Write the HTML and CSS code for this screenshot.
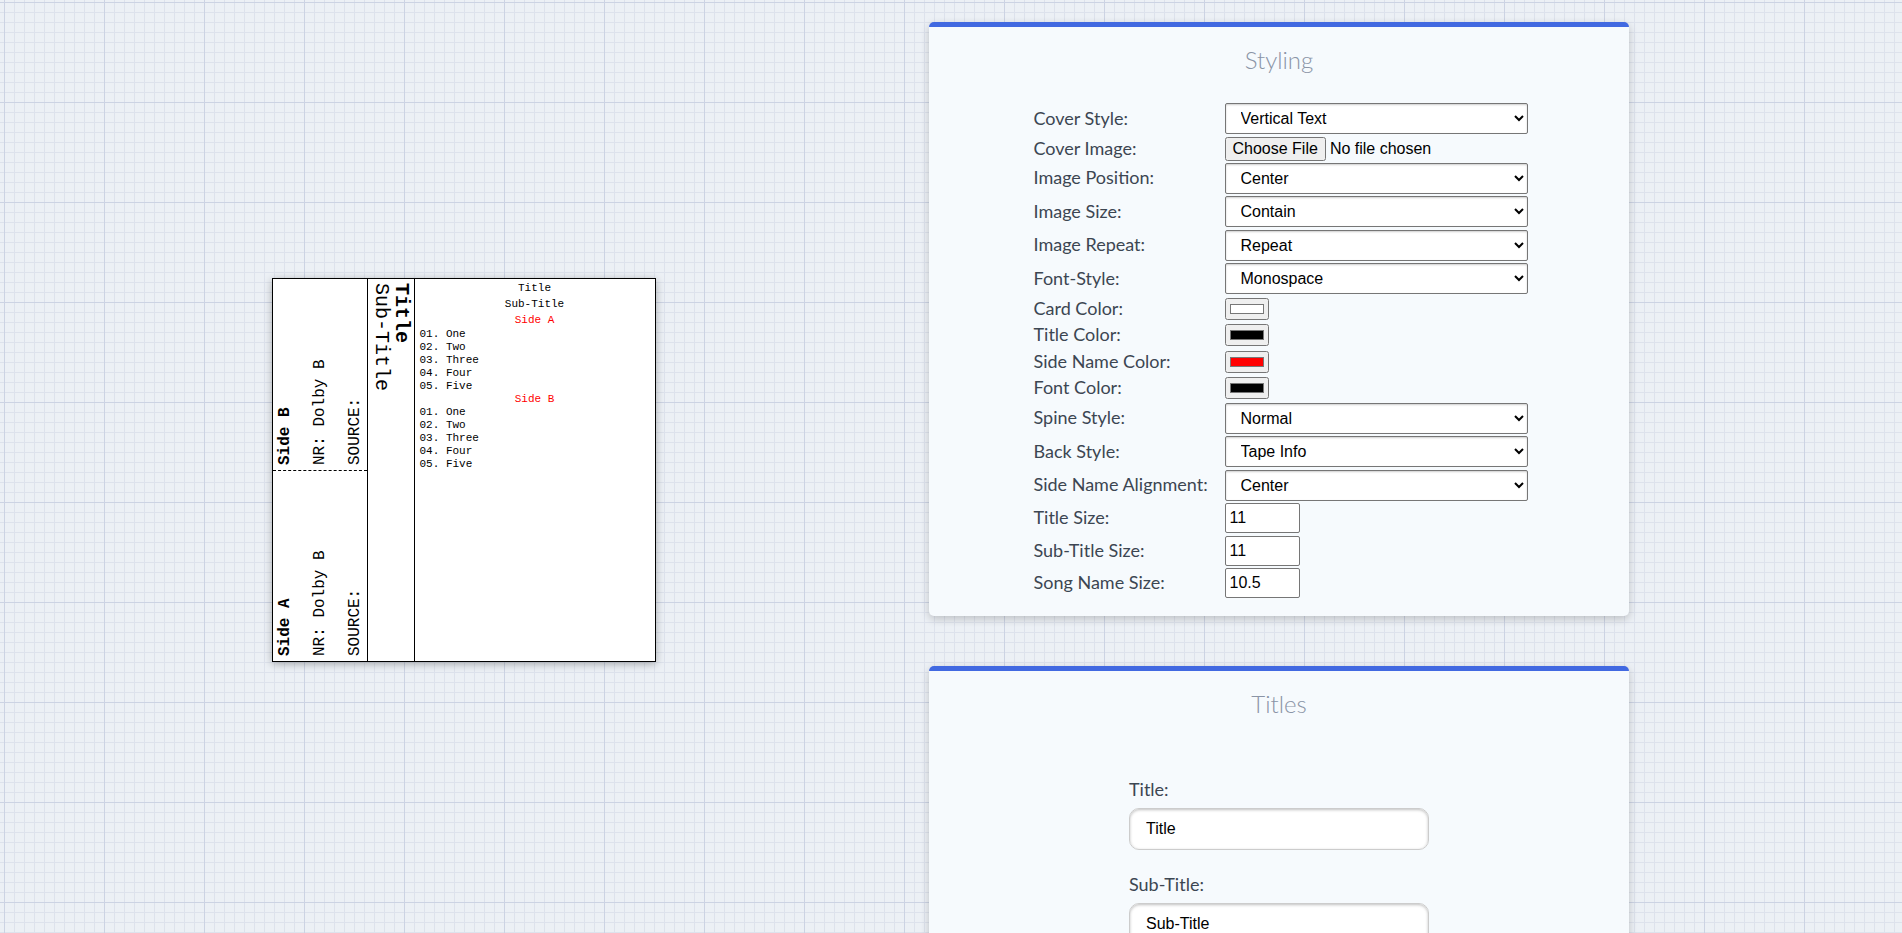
FILE: index.html
```html
<!DOCTYPE html>
<html lang="en">
    <head>
        <meta charset="UTF-8" />
        <meta name="viewport" content="width=device-width, initial-scale=1.0" />
        <title>Cassette Tape Card</title>
        <link rel="stylesheet" href="styles.css">
    </head>
    <body>
        <div class="page">
            <div class="preview">
                <div class="jcard">
                    <div class="back">
                        <div class="back-side back-side-b">
                            <div class="back-name">Side B</div>
                            <div class="back-info">NR: Dolby B</div>
                            <div class="back-info">SOURCE:</div>
                        </div>
                        <div class="back-side">
                            <div class="back-name">Side A</div>
                            <div class="back-info">NR: Dolby B</div>
                            <div class="back-info">SOURCE:</div>
                        </div>
                    </div>
                    <div class="spine">
                        <div class="spine-title">Title</div>
                        <div class="spine-sub">Sub-Title</div>
                    </div>
                    <div class="front">
                        <div class="front-head">Title</div>
                        <div class="front-head">Sub-Title</div>
                        <div class="front-head front-side">Side A</div>
                        <div class="song">01. One</div>
                        <div class="song">02. Two</div>
                        <div class="song">03. Three</div>
                        <div class="song">04. Four</div>
                        <div class="song">05. Five</div>
                        <div class="song front-side">Side B</div>
                        <div class="song">01. One</div>
                        <div class="song">02. Two</div>
                        <div class="song">03. Three</div>
                        <div class="song">04. Four</div>
                        <div class="song">05. Five</div>
                    </div>
                </div>
            </div>

            <div class="forms">
                <section class="card">
                    <h2>Styling</h2>
                    <table class="style-table">
                        <tr class="row-select">
                            <td>Cover Style:</td>
                            <td><select><option>Vertical Text</option></select></td>
                        </tr>
                        <tr class="row-file">
                            <td>Cover Image:</td>
                            <td><input type="file" /></td>
                        </tr>
                        <tr class="row-select">
                            <td>Image Position:</td>
                            <td><select><option>Center</option></select></td>
                        </tr>
                        <tr class="row-select">
                            <td>Image Size:</td>
                            <td><select><option>Contain</option></select></td>
                        </tr>
                        <tr class="row-select">
                            <td>Image Repeat:</td>
                            <td><select><option>Repeat</option></select></td>
                        </tr>
                        <tr class="row-select">
                            <td>Font-Style:</td>
                            <td><select><option>Monospace</option></select></td>
                        </tr>
                        <tr class="row-color">
                            <td>Card Color:</td>
                            <td><input type="color" value="#ffffff" /></td>
                        </tr>
                        <tr class="row-color">
                            <td>Title Color:</td>
                            <td><input type="color" value="#000000" /></td>
                        </tr>
                        <tr class="row-color">
                            <td>Side Name Color:</td>
                            <td><input type="color" value="#ff0000" /></td>
                        </tr>
                        <tr class="row-color">
                            <td>Font Color:</td>
                            <td><input type="color" value="#000000" /></td>
                        </tr>
                        <tr class="row-select">
                            <td>Spine Style:</td>
                            <td><select><option>Normal</option></select></td>
                        </tr>
                        <tr class="row-select">
                            <td>Back Style:</td>
                            <td><select><option>Tape Info</option></select></td>
                        </tr>
                        <tr class="row-select">
                            <td>Side Name Alignment:</td>
                            <td><select><option>Center</option></select></td>
                        </tr>
                        <tr class="row-number">
                            <td>Title Size:</td>
                            <td><input type="text" value="11" /></td>
                        </tr>
                        <tr class="row-number">
                            <td>Sub-Title Size:</td>
                            <td><input type="text" value="11" /></td>
                        </tr>
                        <tr class="row-number">
                            <td>Song Name Size:</td>
                            <td><input type="text" value="10.5" /></td>
                        </tr>
                    </table>
                </section>

                <section class="card">
                    <h2>Titles</h2>
                    <div class="title-fields">
                        <label class="field">
                            Title:
                            <input type="text" value="Title" />
                        </label>
                        <label class="field">
                            Sub-Title:
                            <input type="text" value="Sub-Title" />
                        </label>
                    </div>
                </section>
            </div>
        </div>
    </body>
</html>
```

FILE: styles.css
```css
html,
body {
    height: 100%;
    overflow: hidden;
}

body {
    margin: 0;
    font-family: Lato, "Open Sans", Arial, sans-serif;
    font-size: 18px;
    line-height: 20px;
    color: #3c4652;
    background-color: #ecf0f5;
    background-image:
        linear-gradient(#ccd3e3 1px, transparent 1px),
        linear-gradient(90deg, #ccd3e3 1px, transparent 1px),
        linear-gradient(#dde2ec 1px, transparent 1px),
        linear-gradient(90deg, #dde2ec 1px, transparent 1px);
    background-size: 100px 100px, 100px 100px, 10px 10px, 10px 10px;
    background-position: 4px 2px;
}

.page {
    display: flex;
    padding-right: 273px;
    height: 100%;
}

/* tape card preview */
.preview {
    flex: 1;
    height: 933px;
    padding: 7px 2px 0 0;
    box-sizing: border-box;
    display: flex;
    justify-content: center;
    align-items: center;
}

.jcard {
    display: flex;
    width: 384px;
    height: 384px;
    box-sizing: border-box;
    border: 1px solid #000;
    background-color: #fff;
    color: #000;
    font-family: "Liberation Mono", "Courier New", monospace;
    box-shadow: 0 2px 8px rgba(0, 0, 0, 0.3);
}

.back {
    width: 94px;
    display: flex;
    flex-direction: column;
    border-right: 1px solid #000;
}

.back-side {
    flex: 1;
    display: flex;
    justify-content: space-between;
    padding: 5px 3px 5px 3px;
}

.back-side-b {
    flex: 0 0 192px;
    box-sizing: border-box;
    border-bottom: 1px dashed #000;
}

.back-name,
.back-info {
    writing-mode: vertical-rl;
    transform: rotate(180deg);
    font-size: 16px;
    line-height: 18px;
    width: 18px;
    white-space: nowrap;
}

.back-name {
    font-weight: bold;
}

.spine {
    width: 47px;
    box-sizing: border-box;
    padding: 4px 3px 0 3px;
    border-right: 1px solid #000;
    writing-mode: vertical-rl;
    font-size: 20px;
    line-height: 20px;
}

.spine-title {
    font-weight: bold;
}

.front {
    flex: 1;
    padding: 1px 5px;
    font-size: 11px;
}

.front-head {
    line-height: 16px;
    text-align: center;
}

.song {
    line-height: 13px;
}

.front-side {
    color: #f00;
    text-align: center;
}

/* form cards */
.forms {
    width: 700px;
    padding-top: 22px;
    flex-shrink: 0;
}

.card {
    background-color: #f6fafd;
    border-top: 5px solid #4169e1;
    border-radius: 5px;
    box-shadow: 0 3px 8px rgba(0, 0, 0, 0.2);
    margin-bottom: 50px;
    height: 594px;
    box-sizing: border-box;
}

.card h2 {
    margin: 0;
    padding-top: 18px;
    font-size: 24px;
    font-weight: 300;
    line-height: 29px;
    color: #8a94a6;
    text-align: center;
}

.style-table {
    margin: 27px auto 0;
    padding-left: 3px;
    border-spacing: 0 2px;
}

.style-table td {
    padding: 0;
}

.style-table td:first-child {
    width: 191px;
    padding-bottom: 2px;
}

.row-select td:last-child {
    height: 31.5px;
}

.row-file td:last-child {
    height: 24px;
}

.row-color td:last-child {
    height: 24.5px;
}

.row-number td:last-child {
    height: 30.5px;
}

.style-table select,
.style-table input,
.field input {
    font-family: "Liberation Sans", Arial, sans-serif;
    font-size: 16px;
    color: #000;
    box-sizing: border-box;
    display: block;
}

.style-table select {
    width: 303px;
    height: 31px;
    padding: 0 11px;
    background-color: #fff;
    border: 1px solid #767676;
    border-radius: 2px;
    box-shadow: inset 0 1px 2px rgba(0, 0, 0, 0.2);
}

.style-table input[type="file"] {
    height: 24px;
}

.style-table input[type="color"] {
    width: 44px;
    height: 22px;
}

.style-table input[type="text"] {
    width: 75px;
    height: 30px;
    padding: 0 4px;
    border: 1px solid #767676;
    border-radius: 2px;
}

.title-fields {
    width: 300px;
    margin: 61px auto 0;
    display: flex;
    flex-direction: column;
    gap: 24px;
}

.field input {
    width: 300px;
    height: 42px;
    margin-top: 9px;
    padding: 0 16px;
    background-color: #fff;
    border: 1px solid #ccc;
    border-radius: 10px;
    box-shadow: inset 0 1px 3px rgba(0, 0, 0, 0.25);
}
```
